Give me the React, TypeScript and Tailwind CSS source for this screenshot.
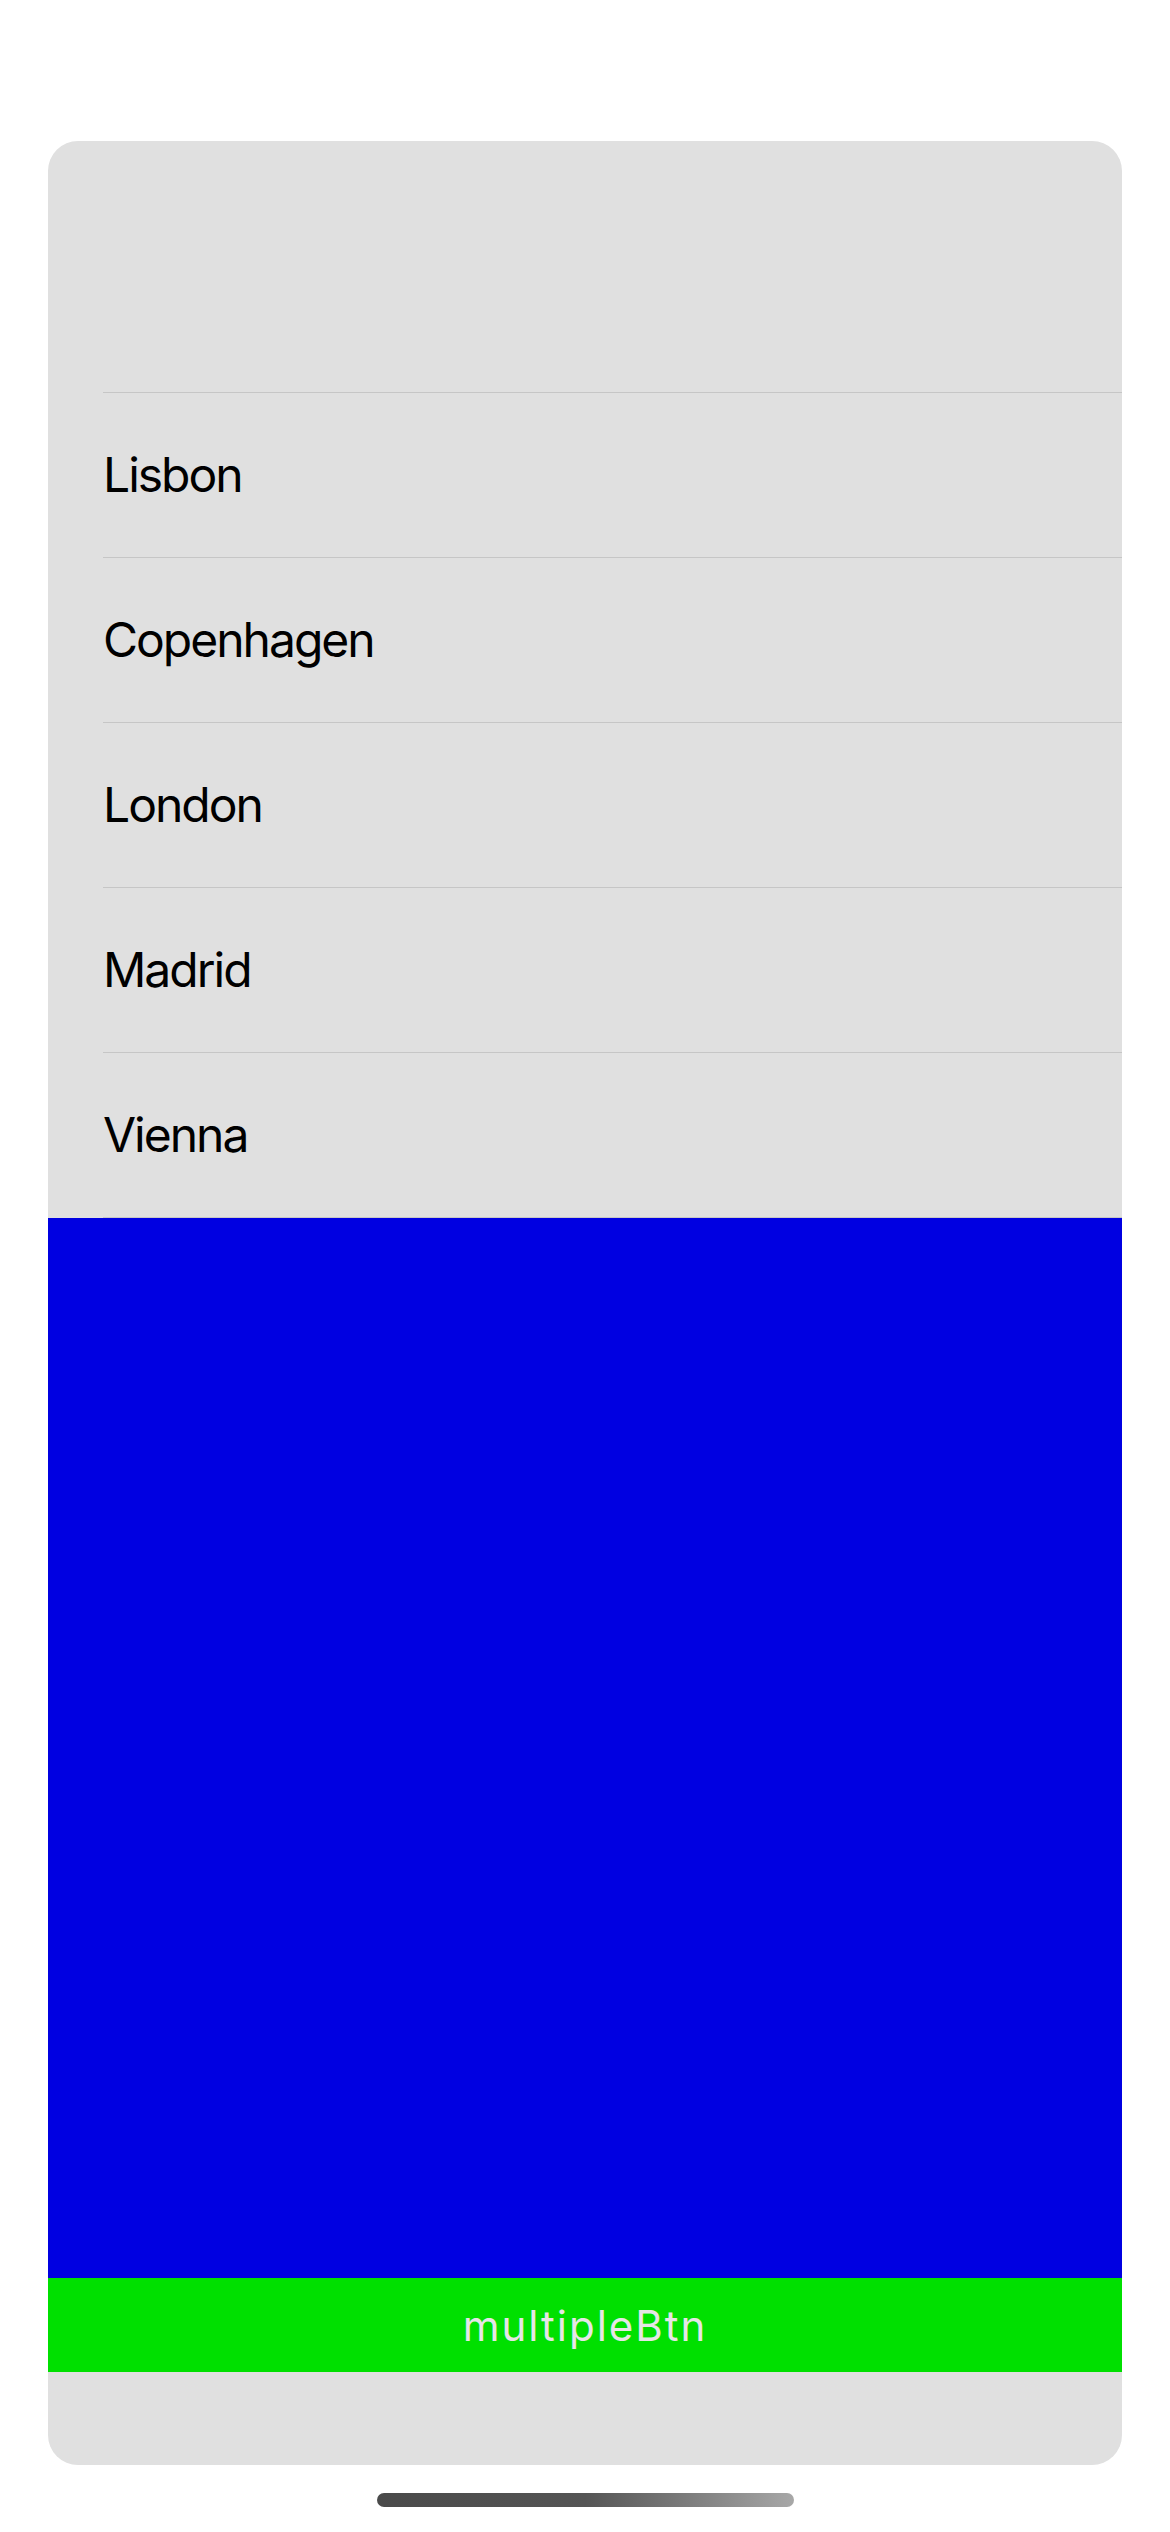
const cities = ["Lisbon", "Copenhagen", "London", "Madrid", "Vienna"];

export default function App() {
  return (
    <div className="min-h-screen bg-white flex flex-col items-center" style={{ fontFamily: "Inter, 'Noto Sans', sans-serif" }}>
      <div className="mt-[141px] w-[1074px] bg-[#e0e0e0] rounded-[30px] overflow-hidden flex flex-col">
        {/* header area */}
        <div className="h-[251px]" />

        {/* city list */}
        <div className="flex flex-col">
          {cities.map((city) => (
            <div key={city} className="pl-[55px]">
              <div className="h-[1px] bg-[#c6c6c6]" />
              <div className="h-[164px] flex items-center text-[48px] tracking-[-2px] text-black leading-none">
                {city}
              </div>
            </div>
          ))}
          <div className="pl-[55px]">
            <div className="h-[1px] bg-[#c6c6c6]" />
          </div>
        </div>

        <div className="h-[1060px] bg-[#0000e1]" />

        <button className="h-[94px] bg-[#00e000] text-[#e6e6e6] text-[42px] tracking-[2px] flex items-center justify-center">
          multipleBtn
        </button>

        <div className="h-[93px]" />
      </div>

      <div className="mt-[28px] w-[417px] h-[14px] rounded-full bg-gradient-to-r from-[#4a4a4a] via-[#555555] to-[#a8a8a8]" />
    </div>
  );
}
